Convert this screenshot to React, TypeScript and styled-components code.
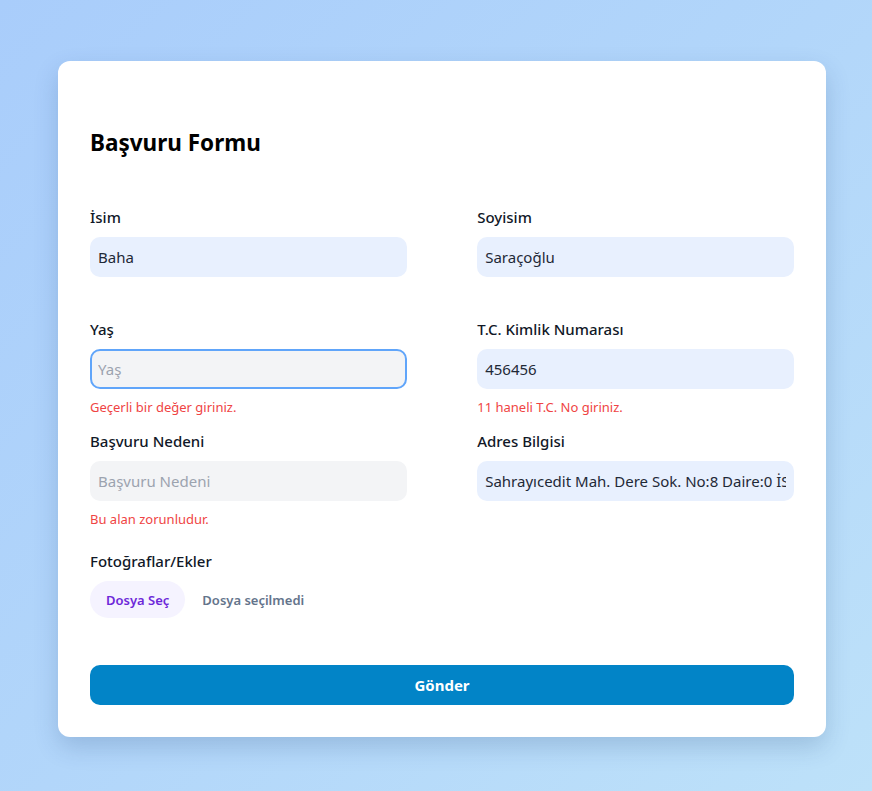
import styled, { createGlobalStyle } from 'styled-components';

const GlobalStyle = createGlobalStyle`
  html, body {
    margin: 0;
    padding: 0;
  }
  body {
    font-family: 'Noto Sans', 'Segoe UI', sans-serif;
    background: linear-gradient(135deg, #a9cdfb 0%, #b2d6fa 50%, #bde1f9 100%);
    min-height: 100vh;
  }
  * {
    box-sizing: border-box;
  }
`;

type Field = {
  label: string;
  placeholder: string;
  value?: string;
  error?: string;
  focused?: boolean;
};

const fields: Field[] = [
  { label: 'İsim', placeholder: 'İsim', value: 'Baha' },
  { label: 'Soyisim', placeholder: 'Soyisim', value: 'Saraçoğlu' },
  { label: 'Yaş', placeholder: 'Yaş', error: 'Geçerli bir değer giriniz.', focused: true },
  { label: 'T.C. Kimlik Numarası', placeholder: 'T.C. Kimlik Numarası', value: '456456', error: '11 haneli T.C. No giriniz.' },
  { label: 'Başvuru Nedeni', placeholder: 'Başvuru Nedeni', error: 'Bu alan zorunludur.' },
  { label: 'Adres Bilgisi', placeholder: 'Adres Bilgisi', value: 'Sahrayıcedit Mah. Dere Sok. No:8 Daire:0 İSTANBUL' },
];

const App = () => {
  return (
    <Page>
      <GlobalStyle />
      <Card>
        <Title>Başvuru Formu</Title>
        <FieldGrid>
          {fields.map((f) => (
            <FieldBox key={f.label}>
              <Label>{f.label}</Label>
              <Input
                placeholder={f.placeholder}
                defaultValue={f.value}
                $filled={!!f.value}
                $focused={!!f.focused}
                readOnly
              />
              <ErrorText>{f.error}</ErrorText>
            </FieldBox>
          ))}
        </FieldGrid>
        <FileField>
          <Label>Fotoğraflar/Ekler</Label>
          <FileRow>
            <FileButton type="button">Dosya Seç</FileButton>
            <FileName>Dosya seçilmedi</FileName>
          </FileRow>
        </FileField>
        <SubmitButton type="button">Gönder</SubmitButton>
      </Card>
    </Page>
  );
};

export default App;

const Page = styled.div`
  display: flex;
  justify-content: center;
  padding: 61px 46px 54px 58px;
`;

const Card = styled.div`
  width: 768px;
  background: #ffffff;
  border-radius: 12px;
  padding: 66px 32px 32px;
  box-shadow: 0 10px 25px rgba(30, 64, 120, 0.2);
`;

const Title = styled.h2`
  margin: 0 0 47px;
  font-size: 22.5px;
  line-height: 32px;
  font-weight: 700;
  color: #000;
`;

const FieldGrid = styled.div`
  display: flex;
  flex-wrap: wrap;
  justify-content: space-between;
`;

const FieldBox = styled.div`
  width: 45%;
  display: flex;
  flex-direction: column;
  margin-bottom: 13px;
`;

const Label = styled.label`
  font-size: 15px;
  line-height: 22px;
  font-weight: 500;
  color: #111827;
  margin-bottom: 9px;
`;

const Input = styled.input<{ $filled: boolean; $focused: boolean }>`
  height: 40px;
  width: 100%;
  border-radius: 10px;
  border: ${(p) => (p.$focused ? '2px solid #60a5fa' : '2px solid transparent')};
  background: ${(p) => (p.$filled ? '#e8f0fe' : '#f3f4f6')};
  padding: 0 6px;
  font-family: inherit;
  font-size: 15px;
  color: #1f2937;
  outline: none;

  &::placeholder {
    color: #9ca3af;
  }
`;

const ErrorText = styled.span`
  margin-top: 8px;
  min-height: 20px;
  font-size: 13px;
  line-height: 20px;
  color: #ef4444;
`;

const FileField = styled.div`
  display: flex;
  flex-direction: column;
  margin-top: 8px;
`;

const FileRow = styled.div`
  display: flex;
  align-items: center;
  gap: 17px;
`;

const FileButton = styled.button`
  height: 37px;
  padding: 0 16px;
  border: none;
  border-radius: 999px;
  background: #f5f3ff;
  color: #6d28d9;
  font-family: inherit;
  font-size: 13px;
  font-weight: 600;
`;

const FileName = styled.span`
  font-size: 13px;
  font-weight: 600;
  color: #64748b;
`;

const SubmitButton = styled.button`
  margin-top: 47px;
  width: 100%;
  height: 40px;
  border: none;
  border-radius: 10px;
  background: #0284c7;
  color: #ffffff;
  font-family: inherit;
  font-size: 15px;
  font-weight: 700;
`;
